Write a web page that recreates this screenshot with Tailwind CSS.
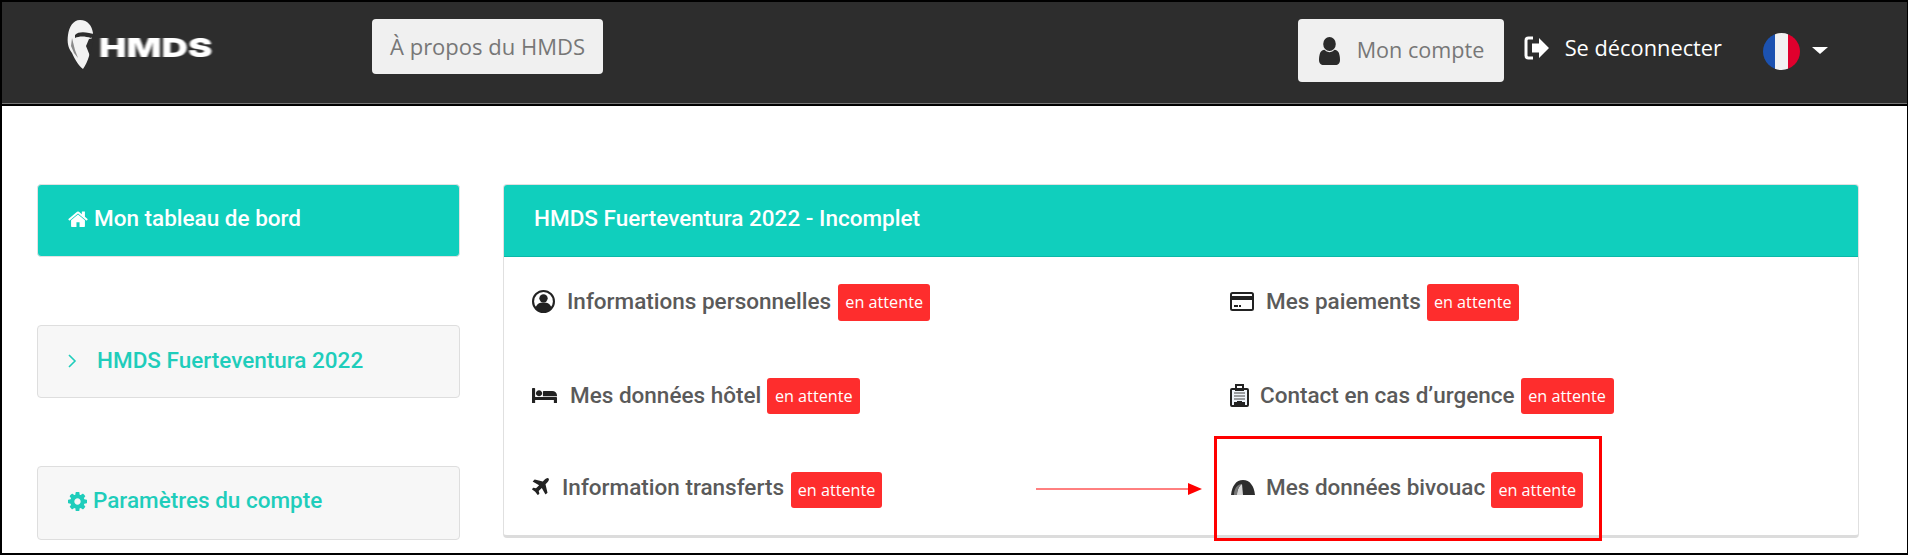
<!doctype html>
<html lang="fr"><head><meta charset="utf-8"><script src="https://cdn.jsdelivr.net/npm/@tailwindcss/browser@4"></script></head>
<body class="bg-black">
<div class="relative w-[1908px] h-[555px] overflow-hidden bg-white border-black border-l-2 border-t-2 border-b-2 border-r font-['Roboto',sans-serif]">
  <!-- header -->
  <header class="h-[104px] bg-[#2d2d2d] border-b-2 border-black shadow-[inset_0_-1px_0_#777] flex items-start pr-[79px] font-['Open_Sans',sans-serif]">
    <div class="w-[370px] shrink-0 pl-[65px] pt-[18px] flex items-start h-[66px] gap-[3px]">
      <svg class="w-[29px] h-[49px] blur-[0.6px]" viewBox="0 0 29 49"><path fill="#f2f2f2" d="M13 0C21 0 25 6 26 13L24 22C24 32 21 42 16 49 12 46 8 40 5 33 1 28 0 22 1 15 2 7 6 0 13 0z"/><path fill="#2d2d2d" d="M8 15C12 11 20 12 29 15L24 18C18 16 12 16 8 18z"/><path fill="#2d2d2d" d="M27 18L23 36 19 26 22 19z"/><path fill="#8a8a8a" d="M5 18L8 30 11 38 7 33 4 26z"/></svg>
      <span class="font-['Inter',sans-serif] font-black text-white text-[26px] leading-none origin-left scale-x-[1.41] blur-[0.6px] mt-[15px]">HMDS</span>
    </div>
    <a class="mt-[17px] w-[231px] h-[55px] shrink-0 bg-[#f0f0f0] rounded-[4px] flex items-center justify-center text-[22px] text-[#777]">À propos du HMDS</a>
    <div class="flex-1"></div>
    <a class="mt-[17px] w-[206px] h-[63px] shrink-0 bg-[#f0f0f0] rounded-[4px] flex items-center pl-[21px] text-[21.6px] text-[#777]">
      <svg class="w-[21px] h-[28px] mr-[17px] shrink-0" viewBox="256 128 1280 1536" preserveAspectRatio="none"><path fill="#2b2b2b" d="M1536 1399q0 109-62.500 187t-150.500 78h-854q-88 0-150.500-78t-62.500-187q0-85 8.500-160.500t31.500-152 58.500-131 94-89 134.500-34.500q131 128 313 128t313-128q76 0 134.500 34.500t94 89 58.500 131 31.500 152 8.500 160.500zm-256-887q0 159-112.500 271.500t-271.500 112.500-271.500-112.500-112.500-271.500 112.500-271.500 271.500-112.500 271.500 112.500 112.500 271.500z"/></svg>
      Mon compte
    </a>
    <a class="ml-[20px] mt-[30px] h-[32px] shrink-0 flex items-center text-[21.8px] text-white">
      <svg class="w-[26px] h-[24px] mr-[15px] shrink-0" viewBox="0 0 26 24"><path fill="none" stroke="#fff" stroke-width="3" d="M9 2H4.500C3 2 2 3 2 4.500v15C2 21 3 22 4.500 22H9"/><path fill="#fff" d="M8 7.500h7V2l10 10-10 10v-5.500H8z"/></svg>
      Se déconnecter
    </a>
    <div class="ml-[41px] mt-[31px] shrink-0 w-[37px] h-[37px] rounded-full overflow-hidden flex">
      <span class="flex-1 bg-[#1c52b0]"></span><span class="flex-1 bg-[#f2f2f2]"></span><span class="flex-1 bg-[#e0002d]"></span>
    </div>
    <div class="ml-[12px] mt-[45px] w-0 h-0 border-x-[8px] border-x-transparent border-t-[7px] border-t-white shrink-0"></div>
  </header>

  <main class="flex pl-[35px] pt-[78px]">
    <!-- sidebar -->
    <aside class="w-[423px] shrink-0 flex flex-col gap-[68px] text-[22.5px] font-medium">
      <div class="h-[73px] rounded-[4px] bg-[#10cfbd] border border-[#e2e2e2] text-white flex items-center pl-[30px] pb-[3px] gap-[6px]">
        <svg class="w-[20px] h-[20px] shrink-0" viewBox="0 130 1664 1500"><path fill="#fff" d="M1408 992v480q0 26-19 45t-45 19h-384v-384h-256v384h-384q-26 0-45-19t-19-45v-480q0-1 .5-3t.5-3l575-474 575 474q1 2 1 6zm223-69l-62 74q-8 9-21 11h-3q-13 0-21-7l-692-577-692 577q-12 8-24 7-13-2-21-11l-62-74q-8-10-7-23.500t11-21.500l719-599q32-26 76-26t76 26l244 204v-195q0-14 9-23t23-9h192q14 0 23 9t9 23v408l219 182q10 8 11 21.500t-7 23.500z"/></svg>
        Mon tableau de bord
      </div>
      <div class="h-[73px] rounded-[4px] bg-[#f7f7f7] border border-[#dedede] text-[#1fcdbb] flex items-center pl-[30px] pb-[2px]">
        <svg class="w-[9px] h-[14px] mr-[20px] shrink-0" viewBox="0 0 9 14"><path fill="none" stroke="#1fcdbb" stroke-width="1.600" d="M1 1l6 6-6 6"/></svg>
        HMDS Fuerteventura 2022
      </div>
      <div class="h-[74px] rounded-[4px] bg-[#f7f7f7] border border-[#dedede] text-[#1fcdbb] flex items-center pl-[30px] pb-[4px] gap-[6px]">
        <svg class="w-[19px] h-[19px] shrink-0" viewBox="128 128 1536 1536"><path fill="#1fcdbb" d="M1152 896q0-106-75-181t-181-75-181 75-75 181 75 181 181 75 181-75 75-181zm512-109v222q0 12-8 23t-20 13l-185 28q-19 54-39 91 35 50 107 138 10 12 10 25t-9 23q-27 37-99 108t-94 71q-12 0-26-9l-138-108q-44 23-91 38-16 136-29 186-7 28-36 28h-222q-14 0-24.500-8.500t-11.500-21.500l-28-184q-49-16-90-37l-141 107q-10 9-25 9-14 0-25-11-126-114-165-168-7-10-7-23 0-12 8-23 15-21 51-66.500t54-70.500q-27-50-41-99l-183-27q-13-2-21-12.500t-8-23.500v-222q0-12 8-23t19-13l186-28q14-46 39-92-40-57-107-138-10-12-10-24 0-10 9-23 26-36 98.500-107.500t94.500-71.500q13 0 26 10l138 107q44-23 91-38 16-136 29-186 7-28 36-28h222q14 0 24.500 8.500t11.500 21.500l28 184q49 16 90 37l142-107q9-9 24-9 13 0 25 10 129 119 165 170 7 8 7 22 0 12-8 23-15 21-51 66.500t-54 70.500q26 50 41 98l183 28q13 2 21 12.500t8 23.500z"/></svg>
        Paramètres du compte
      </div>
    </aside>

    <!-- panel -->
    <section class="ml-[43px] w-[1356px] h-[354px] shrink-0 rounded-[4px] bg-white border border-[#e0e0e0] border-b-[3px] border-b-[#dcdcdc] overflow-hidden">
      <div class="h-[72px] bg-[#10cfbd] border-b border-[#0bb8a8] text-white text-[22.5px] font-medium flex items-center pl-[30px] pb-[3px]">HMDS Fuerteventura 2022 - Incomplet</div>
      <div class="grid grid-cols-[698px_1fr] grid-rows-[94px_94px_94px] pl-[28px] pt-[27px] text-[22.5px] font-medium text-[#5a5a5a]">
        <div class="flex items-center h-[37px]">
          <svg class="w-[23px] h-[23px] mr-[12px] -mt-[3px] shrink-0" viewBox="0 0 22 22"><circle cx="11" cy="11" r="10" fill="none" stroke="#222" stroke-width="2"/><circle cx="11" cy="8" r="4" fill="#222"/><path fill="#222" d="M3.500 17c1-4 4-5 7.500-5s6.500 1 7.500 5c-2 2.500-4.500 4-7.500 4s-5.500-1.500-7.500-4z"/></svg>
          <span class="-mt-[1px]">Informations personnelles</span>
          <span class="ml-[7px] w-[92px] h-[37px] rounded-[3px] bg-[#fe2d2d] text-white text-[16.2px] font-normal font-['Open_Sans',sans-serif] flex items-center justify-center">en attente</span>
        </div>
        <div class="flex items-center h-[37px]">
          <svg class="w-[24px] h-[19px] mr-[12px] -mt-[3px] shrink-0" viewBox="0 0 24 19"><rect x="1" y="1" width="22" height="17" rx="1.500" fill="none" stroke="#222" stroke-width="2"/><rect x="1" y="4" width="22" height="4" fill="#222"/><rect x="4" y="13" width="4" height="2" fill="#222"/><rect x="9" y="13" width="2" height="2" fill="#222"/></svg>
          <span class="-mt-[1px]">Mes paiements</span>
          <span class="ml-[6px] w-[92px] h-[37px] rounded-[3px] bg-[#fe2d2d] text-white text-[16.2px] font-normal font-['Open_Sans',sans-serif] flex items-center justify-center">en attente</span>
        </div>
        <div class="flex items-center h-[36px]">
          <svg class="w-[25px] h-[15px] mr-[13px] -mt-[1px] shrink-0" viewBox="0 256 2048 1280" preserveAspectRatio="none"><path fill="#222" d="M256 1024h1728q26 0 45 19t19 45v448h-256v-256h-1536v256h-256v-1216q0-26 19-45t45-19h128q26 0 45 19t19 45v704zm576-320q0-106-75-181t-181-75-181 75-75 181 75 181 181 75 181-75 75-181zm1216 256v-64q0-159-112.500-271.500t-271.500-112.500h-704q-26 0-45 19t-19 45v384h1152z"/></svg>
          <span class="-mt-[1px]">Mes données hôtel</span>
          <span class="ml-[6px] w-[93px] h-[36px] rounded-[3px] bg-[#fe2d2d] text-white text-[16.2px] font-normal font-['Open_Sans',sans-serif] flex items-center justify-center">en attente</span>
        </div>
        <div class="flex items-center h-[36px]">
          <svg class="w-[19px] h-[23px] mr-[11px] -mt-[1px] shrink-0" viewBox="0 0 19 23"><rect x="1" y="5" width="17" height="17" rx="1" fill="#eef3fa" stroke="#222" stroke-width="2"/><rect x="6" y="1" width="7" height="5" fill="none" stroke="#222" stroke-width="2"/><path stroke="#444" stroke-width="1" d="M4 9h11M4 12h11M4 15h11"/><path fill="#222" d="M4 18h3v-1h5v1h3v3H4z"/></svg>
          <span class="-mt-[1px]">Contact en cas d’urgence</span>
          <span class="ml-[6px] w-[93px] h-[36px] rounded-[3px] bg-[#fe2d2d] text-white text-[16.2px] font-normal font-['Open_Sans',sans-serif] flex items-center justify-center">en attente</span>
        </div>
        <div class="flex items-center h-[36px]">
          <svg class="w-[17px] h-[17px] mr-[13px] -mt-[7px] shrink-0" viewBox="0 0 1408 1408"><path fill="#222" d="M1376 32q44 52 12 148t-108 172l-161 161 160 696q5 19-12 33l-128 96q-7 6-19 6-4 0-7-1-15-3-21-16l-279-508-259 259 53 194q5 17-8 31l-96 96q-9 9-23 9h-2q-15-2-24-13l-189-252-252-189q-11-7-13-23-1-13 9-25l96-97q9-9 23-9 6 0 8 1l194 53 259-259-508-279q-14-8-17-24-2-16 9-27l128-128q14-13 30-8l665 159 160-160q76-76 172-108t148 12z"/></svg>
          <span class="-mt-[4px]">Information transferts</span>
          <span class="ml-[7px] w-[91px] h-[36px] rounded-[3px] bg-[#fe2d2d] text-white text-[16.2px] font-normal font-['Open_Sans',sans-serif] flex items-center justify-center">en attente</span>
        </div>
        <div class="flex items-center h-[36px]">
          <svg class="w-[24px] h-[15px] ml-[1px] mr-[11px] -mt-[5px] shrink-0 blur-[0.5px]" viewBox="0 0 24 15"><path fill="#2d2d2d" d="M0 15C1 6 5 0 12 0s11 6 12 15z"/><path fill="#d8d8d8" d="M6 15C6 10 8 6 11 4l1 11z"/><path fill="#777" d="M3 15C3 9 6 4 11 4 8 6 6 10 6 15z"/></svg>
          <span class="-mt-[4px]">Mes données bivouac</span>
          <span class="ml-[6px] w-[92px] h-[36px] rounded-[3px] bg-[#fe2d2d] text-white text-[16.2px] font-normal font-['Open_Sans',sans-serif] flex items-center justify-center">en attente</span>
        </div>
      </div>
    </section>
  </main>

  <!-- annotation overlay -->
  <div class="absolute left-[1212px] top-[434px] w-[388px] h-[105px] border-[3px] border-[#f00]"></div>
  <svg class="absolute left-[1034px] top-[480px] w-[166px] h-[14px]" viewBox="0 0 166 14"><path stroke="#f00" stroke-width="1" d="M0 7h154"/><path fill="#f00" d="M152 1l14 6-14 6z"/></svg>
</div>
</body></html>
